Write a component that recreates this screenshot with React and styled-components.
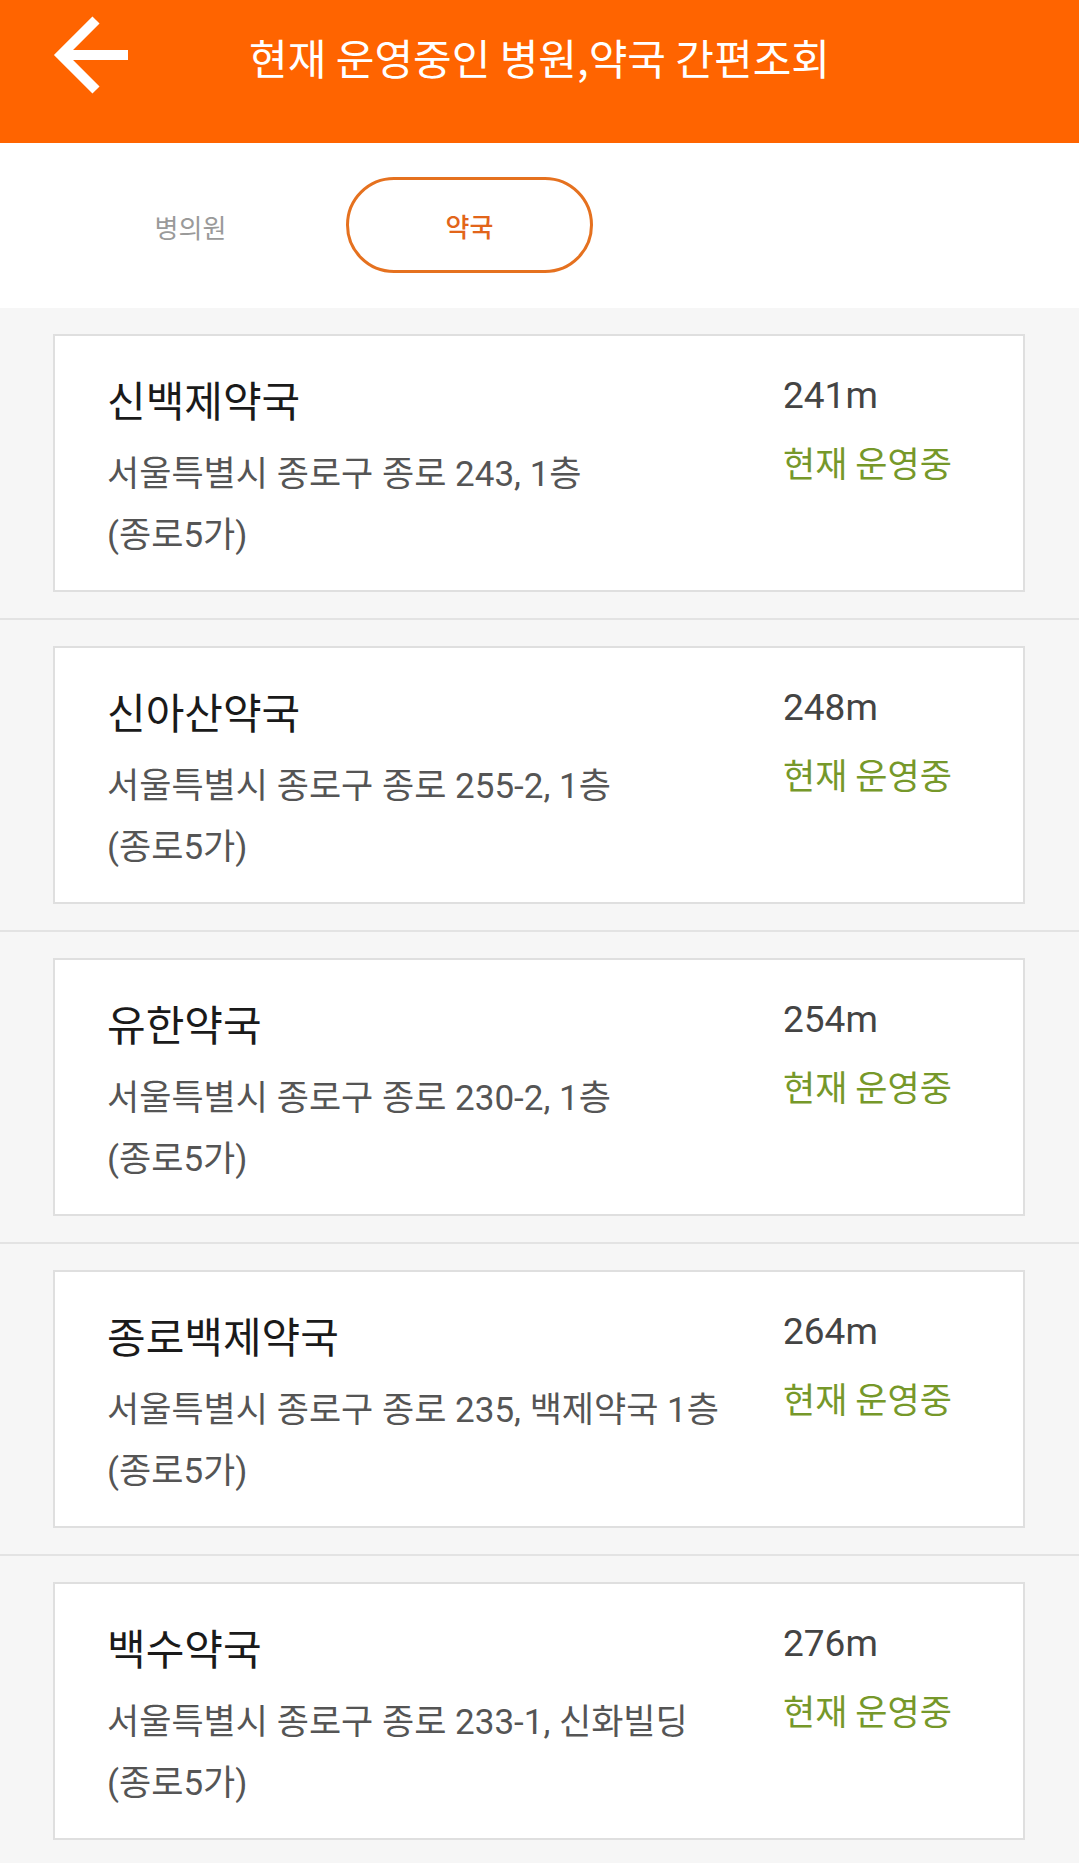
import React from "react";
import styled, { createGlobalStyle } from "styled-components";

const Global = createGlobalStyle`
  html, body { margin: 0; padding: 0; background: #f6f6f6; }
  body { font-family: Roboto, "Noto Sans CJK KR", sans-serif; }
  * { box-sizing: border-box; }
`;

const Page = styled.div`
  width: 1079px;
  min-height: 1863px;
  background: #f6f6f6;
`;

const Header = styled.header`
  height: 143px;
  background: #ff6400;
  display: grid;
  grid-template-columns: 1fr auto 1fr;
  align-items: start;
  padding-top: 15px;
`;

const BackButton = styled.button`
  justify-self: start;
  margin-left: 50px;
  width: 84px;
  height: 82px;
  padding: 0;
  border: none;
  background: transparent;
  display: flex;
`;

const Title = styled.h1`
  margin: 0;
  padding-top: 19px;
  font-family: "Noto Sans CJK KR", sans-serif;
  font-size: 42px;
  line-height: 46px;
  font-weight: 400;
  color: #ffffff;
  white-space: nowrap;
`;

const Tabs = styled.nav`
  height: 165px;
  background: #ffffff;
  display: flex;
  align-items: flex-start;
  gap: 32px;
  padding: 34px 0 0 67px;
`;

const Tab = styled.div`
  width: 247px;
  height: 96px;
  border-radius: 48px;
  border: 3px solid ${(p) => (p.$active ? "#e5711f" : "transparent")};
  display: flex;
  align-items: center;
  justify-content: center;
  font-family: "Noto Sans CJK KR", sans-serif;
  font-size: 26px;
  font-weight: ${(p) => (p.$active ? 500 : 400)};
  color: ${(p) => (p.$active ? "#e2651a" : "#9a9a9a")};
  padding-top: ${(p) => (p.$active ? "0" : "3px")};
`;

const List = styled.main`
  display: flex;
  flex-direction: column;
`;

const Row = styled.section`
  padding: 26px 54px 26px 53px;
  border-bottom: 2px solid #e3e3e3;
`;

const Card = styled.article`
  height: 258px;
  background: #ffffff;
  border: 2px solid #dfdfdf;
  display: grid;
  grid-template-columns: 1fr 240px;
  padding: 37px 0 0 52px;
`;

const Info = styled.div`
  padding-top: 3px;
  display: flex;
  flex-direction: column;
`;

const Name = styled.h2`
  margin: 0;
  font-family: "Noto Sans CJK KR", sans-serif;
  font-size: 42px;
  line-height: 46px;
  font-weight: 400;
  color: #1a1a1a;
`;

const Address = styled.p`
  margin: 22px 0 0;
  font-size: 35px;
  line-height: 61px;
  color: #555555;
`;

const AddrLine = styled.span`
  display: block;
  white-space: nowrap;
`;

const Side = styled.div`
  display: flex;
  flex-direction: column;
`;

const Distance = styled.div`
  font-size: 37px;
  line-height: 46px;
  color: #444444;
`;

const Status = styled.div`
  margin-top: 20px;
  font-family: "Noto Sans CJK KR", sans-serif;
  font-size: 35px;
  line-height: 46px;
  font-weight: 400;
  color: #76982a;
`;

const pharmacies = [
  { name: "신백제약국", addr: "서울특별시 종로구 종로 243, 1층", sub: "(종로5가)", dist: "241m" },
  { name: "신아산약국", addr: "서울특별시 종로구 종로 255-2, 1층", sub: "(종로5가)", dist: "248m" },
  { name: "유한약국", addr: "서울특별시 종로구 종로 230-2, 1층", sub: "(종로5가)", dist: "254m" },
  { name: "종로백제약국", addr: "서울특별시 종로구 종로 235, 백제약국 1층", sub: "(종로5가)", dist: "264m" },
  { name: "백수약국", addr: "서울특별시 종로구 종로 233-1, 신화빌딩", sub: "(종로5가)", dist: "276m" },
];

export default function App() {
  return (
    <Page>
      <Global />
      <Header>
        <BackButton aria-label="뒤로">
          <svg width="84" height="82" viewBox="0 0 84 82">
            <path
              d="M46 5 L11 40 L46 75 M11 40 L78 40"
              fill="none"
              stroke="#ffffff"
              strokeWidth="10"
              strokeLinejoin="miter"
            />
          </svg>
        </BackButton>
        <Title>현재 운영중인 병원,약국 간편조회</Title>
      </Header>
      <Tabs>
        <Tab>병의원</Tab>
        <Tab $active>약국</Tab>
      </Tabs>
      <List>
        {pharmacies.map((p) => (
          <Row key={p.name}>
            <Card>
              <Info>
                <Name>{p.name}</Name>
                <Address>
                  <AddrLine>{p.addr}</AddrLine>
                  <AddrLine>{p.sub}</AddrLine>
                </Address>
              </Info>
              <Side>
                <Distance>{p.dist}</Distance>
                <Status>현재 운영중</Status>
              </Side>
            </Card>
          </Row>
        ))}
      </List>
    </Page>
  );
}
